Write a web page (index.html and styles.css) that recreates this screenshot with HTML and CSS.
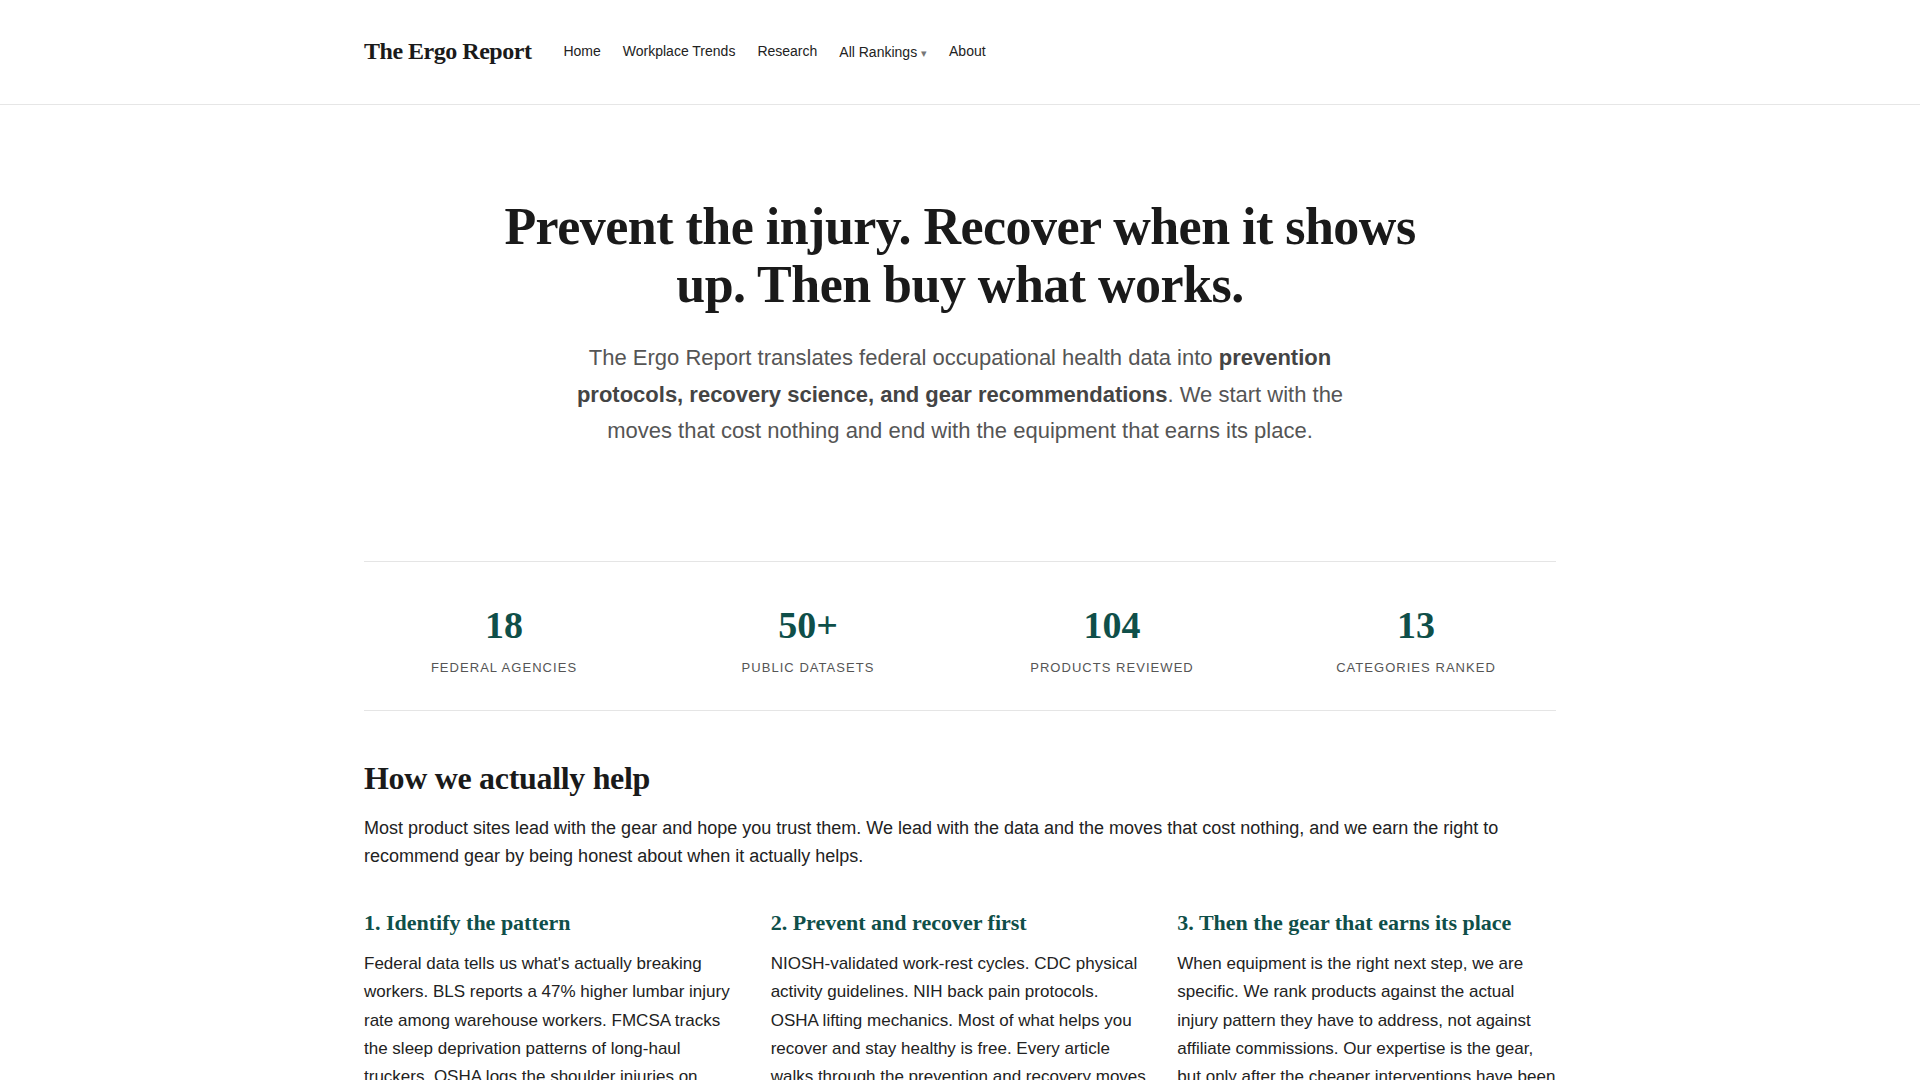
FILE: index.html
```html
<!DOCTYPE html>
<html lang="en">
<head>
<meta charset="utf-8">
<title>The Ergo Report</title>
<link rel="stylesheet" href="styles.css">
</head>
<body>
<header class="site-header">
  <div class="container header-inner">
    <a class="logo" href="#">The Ergo Report</a>
    <nav class="nav">
      <a href="#">Home</a>
      <a href="#">Workplace Trends</a>
      <a href="#">Research</a>
      <button class="dropdown" type="button">All Rankings <span class="caret">▾</span></button>
      <a href="#">About</a>
    </nav>
  </div>
</header>
<main>
  <section class="hero">
    <div class="container hero-inner">
      <h1>Prevent the injury. Recover when it shows up. Then buy what works.</h1>
      <p class="lead">The Ergo Report translates federal occupational health data into <strong>prevention protocols, recovery science, and gear recommendations</strong>. We start with the moves that cost nothing and end with the equipment that earns its place.</p>
    </div>
  </section>
  <section class="container">
    <div class="stats">
      <div class="stat"><div class="stat-num">18</div><div class="stat-label">Federal Agencies</div></div>
      <div class="stat"><div class="stat-num">50+</div><div class="stat-label">Public Datasets</div></div>
      <div class="stat"><div class="stat-num">104</div><div class="stat-label">Products Reviewed</div></div>
      <div class="stat"><div class="stat-num">13</div><div class="stat-label">Categories Ranked</div></div>
    </div>
  </section>
  <section class="container help">
    <h2>How we actually help</h2>
    <p class="intro">Most product sites lead with the gear and hope you trust them. We lead with the data and the moves that cost nothing, and we earn the right to recommend gear by being honest about when it actually helps.</p>
    <div class="steps">
      <div class="step">
        <h3>1. Identify the pattern</h3>
        <p>Federal data tells us what's actually breaking workers. BLS reports a 47% higher lumbar injury rate among warehouse workers. FMCSA tracks the sleep deprivation patterns of long-haul truckers. OSHA logs the shoulder injuries on assembly lines and the wrist strain of desk work.</p>
      </div>
      <div class="step">
        <h3>2. Prevent and recover first</h3>
        <p>NIOSH-validated work-rest cycles. CDC physical activity guidelines. NIH back pain protocols. OSHA lifting mechanics. Most of what helps you recover and stay healthy is free. Every article walks through the prevention and recovery moves before it mentions a single product.</p>
      </div>
      <div class="step">
        <h3>3. Then the gear that earns its place</h3>
        <p>When equipment is the right next step, we are specific. We rank products against the actual injury pattern they have to address, not against affiliate commissions. Our expertise is the gear, but only after the cheaper interventions have been covered honestly.</p>
      </div>
    </div>
  </section>
</main>
</body>
</html>
```

FILE: styles.css
```css
* { box-sizing: border-box; }
html, body { margin: 0; padding: 0; background: #fff; }
body {
  font-family: "Liberation Sans", Arial, sans-serif;
  color: #222;
}
a { color: inherit; text-decoration: none; }

.container {
  max-width: 1240px;
  margin: 0 auto;
  padding: 0 24px;
}

.site-header {
  border-bottom: 1px solid #e6e6e6;
}
.header-inner {
  display: flex;
  align-items: center;
  gap: 32px;
  height: 104px;
  padding-bottom: 2px;
}
.logo {
  font-family: "Liberation Serif", "Times New Roman", serif;
  font-weight: 700;
  font-size: 24px;
  letter-spacing: -0.02em;
  color: #1a1a1a;
}
.nav {
  display: flex;
  align-items: center;
  gap: 22px;
  font-size: 14px;
  color: #222;
}
.dropdown {
  font: inherit;
  color: inherit;
  background: none;
  border: 0;
  padding: 0;
  margin-top: 2px;
  cursor: pointer;
}
.caret {
  color: #777;
  font-size: 11px;
}

.hero-inner {
  display: flex;
  flex-direction: column;
  align-items: center;
  text-align: center;
  padding-top: 93px;
  padding-bottom: 112px;
}
.hero h1 {
  font-family: "Liberation Serif", "Times New Roman", serif;
  font-weight: 700;
  font-size: 52px;
  line-height: 1.12;
  letter-spacing: -0.01em;
  color: #1a1a1a;
  max-width: 960px;
  margin: 0 0 26px;
}
.lead {
  font-size: 22px;
  line-height: 1.65;
  color: #555;
  max-width: 800px;
  margin: 0;
}
.lead strong { color: #444; }

.stats {
  display: grid;
  grid-template-columns: repeat(4, 1fr);
  gap: 24px;
  border-top: 1px solid #e5e5e5;
  border-bottom: 1px solid #e5e5e5;
  padding: 41px 0 33px;
  text-align: center;
}
.stat-num {
  font-family: "Liberation Serif", "Times New Roman", serif;
  font-weight: 700;
  font-size: 38px;
  line-height: 1.2;
  color: #0f4f49;
}
.stat-label {
  margin-top: 9px;
  font-size: 13px;
  line-height: 1.5;
  letter-spacing: 0.08em;
  text-transform: uppercase;
  color: #555;
}

.help { padding-top: 48px; }
.help h2 {
  font-family: "Liberation Serif", "Times New Roman", serif;
  font-weight: 700;
  font-size: 32px;
  line-height: 1.2;
  letter-spacing: -0.01em;
  color: #1a1a1a;
  margin: 0 0 16px;
}
.intro {
  font-size: 18px;
  line-height: 28px;
  margin: 0 0 39px;
  color: #222;
}
.steps {
  display: grid;
  grid-template-columns: repeat(3, 1fr);
  gap: 28px;
}
.step h3 {
  font-family: "Liberation Serif", "Times New Roman", serif;
  font-weight: 700;
  font-size: 22px;
  line-height: 1.3;
  color: #0f4f49;
  margin: 0 0 13px;
}
.step p {
  font-size: 17px;
  line-height: 1.65;
  margin: 0;
  color: #222;
}
```
